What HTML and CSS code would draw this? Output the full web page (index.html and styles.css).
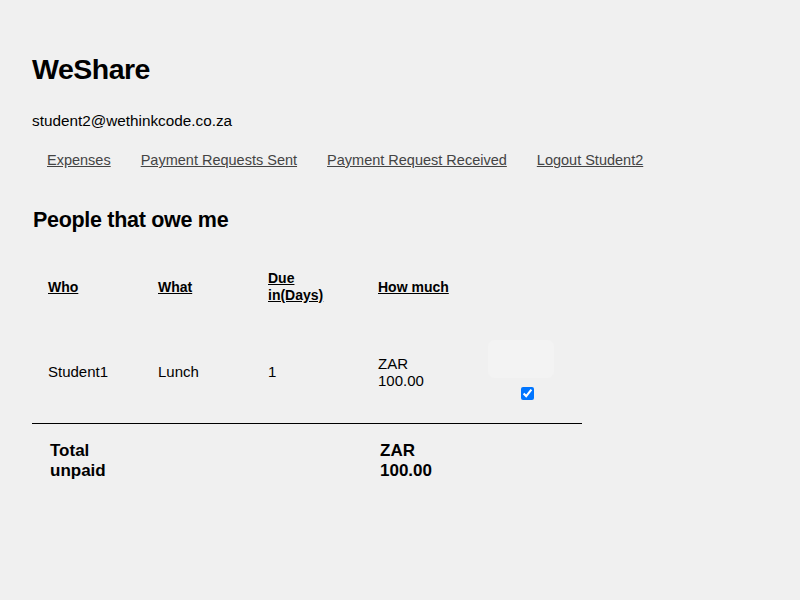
FILE: index.html
```html
<!DOCTYPE html>
<html>
<head>
<meta charset="utf-8">
<link rel="stylesheet" href="styles.css">
</head>
<body>
<div class="page">
  <h1 class="title">WeShare</h1>
  <div class="email">student2@wethinkcode.co.za</div>
  <nav class="nav">
    <a href="#">Expenses</a>
    <a href="#">Payment Requests Sent</a>
    <a href="#">Payment Request Received</a>
    <a href="#">Logout Student2</a>
  </nav>
  <h2 class="subtitle">People that owe me</h2>
  <table class="owes">
    <thead>
      <tr>
        <th><span class="u">Who</span></th>
        <th><span class="u">What</span></th>
        <th><span class="u">Due in(Days)</span></th>
        <th><span class="u">How much</span></th>
        <th></th>
      </tr>
    </thead>
    <tbody>
      <tr>
        <td>Student1</td>
        <td>Lunch</td>
        <td>1</td>
        <td>ZAR 100.00</td>
        <td class="act">
          <button class="pay" type="button"></button>
          <div class="chk"><input type="checkbox" checked></div>
        </td>
      </tr>
    </tbody>
    <tfoot>
      <tr>
        <th>Total unpaid</th>
        <td></td>
        <td></td>
        <th>ZAR 100.00</th>
        <td></td>
      </tr>
    </tfoot>
  </table>
</div>
</body>
</html>
```

FILE: styles.css
```css
html, body {
  margin: 0;
  padding: 0;
  background: #f0f0f0;
}
body {
  font-family: "Liberation Sans", Arial, sans-serif;
  color: #000;
}
.page {
  padding: 50px 32px 0 32px;
}
.title {
  font-size: 28.5px;
  font-weight: bold;
  margin: 0;
  line-height: 38px;
  letter-spacing: -0.5px;
}
.email {
  font-size: 15.3px;
  margin-top: 23px;
  line-height: 20px;
}
.nav {
  display: flex;
  gap: 30px;
  padding-left: 15px;
  margin-top: 19px;
  font-size: 14.5px;
  line-height: 20px;
}
.nav a {
  color: #444;
  text-decoration: underline;
}
.subtitle {
  font-size: 21.5px;
  font-weight: bold;
  margin: 36px 0 0 1px;
  line-height: 28px;
  letter-spacing: -0.3px;
}
.owes {
  border-collapse: collapse;
  table-layout: fixed;
  width: 550px;
  margin-top: 18px;
  font-size: 15px;
  line-height: 17px;
}
.owes th, .owes td {
  box-sizing: border-box;
  width: 110px;
  padding: 18px 16px;
  text-align: left;
  vertical-align: middle;
}
.owes thead th {
  font-weight: bold;
  font-size: 14px;
}
.u {
  text-decoration: underline;
}
.owes tbody td {
  font-weight: normal;
  padding-bottom: 20px;
}
.owes tfoot tr {
  border-top: 1px solid #000;
}
.owes tfoot th {
  font-size: 17px;
  line-height: 20px;
  padding: 17px 18px 16px 18px;
}
.pay {
  display: block;
  width: 66px;
  height: 38px;
  border: none;
  border-radius: 7px;
  background: #f3f3f3;
  padding: 0;
  margin: 0;
}
.chk {
  text-align: center;
  line-height: 0;
  margin-top: 6px;
}
.chk input {
  margin: 3px;
}
```
